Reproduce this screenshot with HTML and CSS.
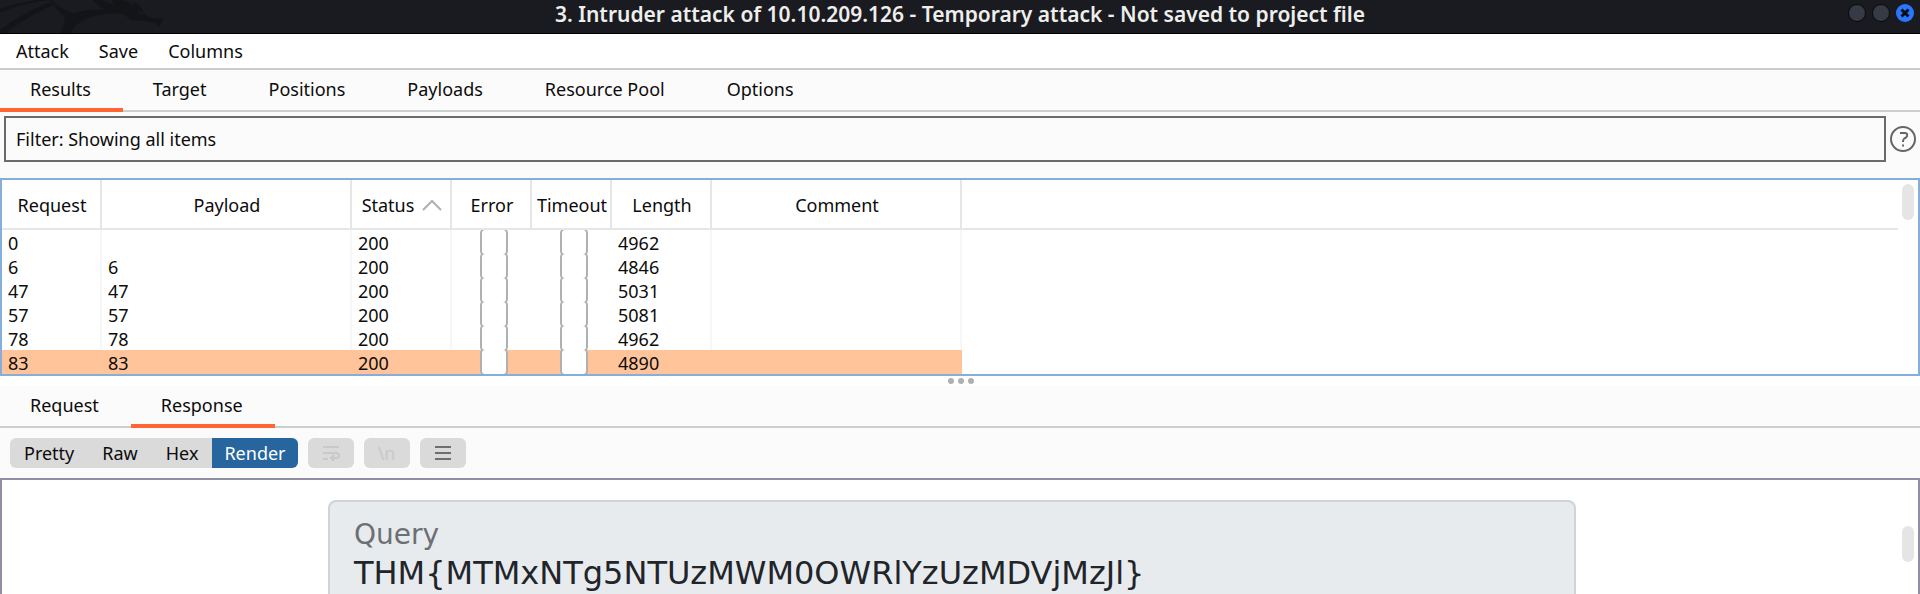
FILE: index.html
```html
<!DOCTYPE html>
<html lang="en">
<head>
<meta charset="utf-8">
<title>Intruder attack</title>
<link rel="stylesheet" href="styles.css">
</head>
<body>
<div class="window">
  <header class="titlebar">
    <svg class="dragon" width="170" height="33" viewBox="0 0 170 33" aria-hidden="true">
      <path class="dragon-fill" d="M52 0C58 6 66 12 74 13C84 10 94 9 106 10C98 6 94 3 93 0H102L114 5L112 0H123L134 5L133 1C140 5 143 9 143 13L146 15C150 18 154 19 164 18L159 27L155 23C146 21 138 20 134 21C129 20 127 16 124 14C106 12 78 16 71 33H60C64 25 66 19 64 16C58 11 54 6 50 0Z"/>
      <path class="dragon-fill" d="M0 30C16 18 32 9 50 2L53 5C36 13 18 23 6 33H0Z"/>
      <path class="dragon-fill" d="M0 9C14 4 26 1 38 0H52C32 2 14 6 0 13Z"/>
      <path class="dragon-eye" d="M138 12l5 2"/>
    </svg>
    <h1 class="title">3. Intruder attack of 10.10.209.126 - Temporary attack - Not saved to project file</h1>
    <div class="controls">
      <button class="control" aria-label="Minimize"></button>
      <button class="control" aria-label="Maximize"></button>
      <button class="control close" aria-label="Close">
        <svg width="18" height="18" viewBox="0 0 18 18"><path d="M5.5 5.5l7 7M12.5 5.5l-7 7"/></svg>
      </button>
    </div>
  </header>

  <nav class="menubar">
    <button class="menu">Attack</button>
    <button class="menu">Save</button>
    <button class="menu">Columns</button>
  </nav>

  <div class="tabs" role="tablist">
    <button class="tab selected" role="tab" aria-selected="true">Results</button>
    <button class="tab" role="tab">Target</button>
    <button class="tab" role="tab">Positions</button>
    <button class="tab" role="tab">Payloads</button>
    <button class="tab" role="tab">Resource Pool</button>
    <button class="tab" role="tab">Options</button>
  </div>

  <div class="filterbar">
    <button class="filter">Filter: Showing all items</button>
    <button class="help" aria-label="Help">
      <svg width="26" height="26" viewBox="0 0 26 26"><circle cx="13" cy="13" r="12"/><path d="M10 7H15C18 7 17.500 10.500 16 11.500C14 12.500 13 13 13 16M13 18.500v2"/></svg>
    </button>
  </div>

  <section class="results">
    <table class="grid">
      <colgroup>
        <col class="w-medium"><col class="w-wide"><col class="w-medium"><col class="w-small"><col class="w-small"><col class="w-medium"><col class="w-wide"><col>
      </colgroup>
      <thead>
        <tr>
          <th>Request</th><th>Payload</th>
          <th><span class="sorted">Status <svg width="20" height="12" viewBox="0 0 20 12"><path d="M1 11L10 2L19 11"/></svg></span></th>
          <th>Error</th><th>Timeout</th><th>Length</th><th>Comment</th><th class="rest"></th>
        </tr>
      </thead>
      <tbody>
        <tr><td>0</td><td></td><td>200</td><td class="check"><input type="checkbox" aria-label="Error"></td><td class="check"><input type="checkbox" aria-label="Timeout"></td><td>4962</td><td></td><td class="rest"></td></tr>
        <tr><td>6</td><td>6</td><td>200</td><td class="check"><input type="checkbox" aria-label="Error"></td><td class="check"><input type="checkbox" aria-label="Timeout"></td><td>4846</td><td></td><td class="rest"></td></tr>
        <tr><td>47</td><td>47</td><td>200</td><td class="check"><input type="checkbox" aria-label="Error"></td><td class="check"><input type="checkbox" aria-label="Timeout"></td><td>5031</td><td></td><td class="rest"></td></tr>
        <tr><td>57</td><td>57</td><td>200</td><td class="check"><input type="checkbox" aria-label="Error"></td><td class="check"><input type="checkbox" aria-label="Timeout"></td><td>5081</td><td></td><td class="rest"></td></tr>
        <tr><td>78</td><td>78</td><td>200</td><td class="check"><input type="checkbox" aria-label="Error"></td><td class="check"><input type="checkbox" aria-label="Timeout"></td><td>4962</td><td></td><td class="rest"></td></tr>
        <tr class="active"><td>83</td><td>83</td><td>200</td><td class="check"><input type="checkbox" aria-label="Error"></td><td class="check"><input type="checkbox" aria-label="Timeout"></td><td>4890</td><td></td><td class="rest"></td></tr>
      </tbody>
    </table>
    <div class="scroll"><div class="thumb"></div></div>
  </section>

  <div class="splitter"><i></i><i></i><i></i></div>

  <div class="tabs" role="tablist">
    <button class="tab" role="tab">Request</button>
    <button class="tab selected" role="tab" aria-selected="true">Response</button>
  </div>

  <div class="toolbar">
    <div class="segments">
      <button class="segment">Pretty</button>
      <button class="segment">Raw</button>
      <button class="segment">Hex</button>
      <button class="segment current">Render</button>
    </div>
    <button class="tool off" aria-label="Wrap lines" disabled>
      <svg width="18" height="16" viewBox="0 0 18 16"><path d="M1 2H17M1 8H14C18 8 18 13 14 13H10M12 10L9 13L12 16M1 14H6"/></svg>
    </button>
    <button class="tool off" disabled>\n</button>
    <button class="tool" aria-label="Menu">
      <svg width="18" height="16" viewBox="0 0 18 16"><path d="M1 2H17M1 8H17M1 14H17"/></svg>
    </button>
  </div>

  <section class="render">
    <div class="page">
      <div class="card">
        <p class="label">Query</p>
        <p class="flag">THM{MTMxNTg5NTUzMWM0OWRlYzUzMDVjMzJl}</p>
      </div>
    </div>
    <div class="scroll middle"><div class="thumb"></div></div>
  </section>
</div>
</body>
</html>
```
FILE: styles.css
```css
* { box-sizing: border-box; }
body {
  margin: 0;
  background: #fbfbfb;
  color: #0c0c0c;
  font: 18px/24px "Noto Sans", sans-serif;
}
button {
  margin: 0;
  padding: 0;
  border: 0;
  background: none;
  color: inherit;
  font: inherit;
}
svg { display: block; fill: none; stroke: currentColor; }

.window {
  display: flex;
  flex-direction: column;
  height: 100vh;
  overflow: hidden;
}
.window > * { flex: none; }

.titlebar {
  display: grid;
  grid-template-columns: 1fr auto 1fr;
  height: 34px;
  background: #1a1b20;
  border-bottom: 1px solid #000;
}
.dragon-fill { fill: #131418; stroke: none; }
.dragon-eye { stroke: #202228; }
.title {
  margin: 0;
  color: #eeeeec;
  font-size: 21px;
  font-weight: 600;
  line-height: 28px;
}
.controls {
  display: flex;
  justify-content: flex-end;
  gap: 6px;
  padding: 4px 6px;
}
.control {
  width: 18px;
  height: 18px;
  border: 1px solid #08090b;
  border-radius: 50%;
  background: #363a45;
}
.close { border: 0; background: #2777ff; color: #0b0d14; }
.close svg { stroke-width: 3; }

.menubar {
  display: flex;
  gap: 30px;
  height: 36px;
  padding: 0 16px;
  background: #fff;
  border-bottom: 2px solid #ccc;
}

.tabs {
  display: flex;
  height: 42px;
  border-bottom: 2px solid #cbd0cf;
}
.tab {
  height: 42px;
  padding: 0 32px 0 30px;
  border-bottom: 4px solid transparent;
}
.tab.selected { border-color: #ff6633; }

.filterbar {
  display: flex;
  align-items: center;
  gap: 4px;
  padding: 4px 4px 16px;
}
.filter {
  flex: 1;
  height: 46px;
  padding: 0 10px;
  border: 2px solid #6b6b6b;
  text-align: left;
}
.help { color: #666; }
.help svg { stroke-width: 2; }

.results {
  display: flex;
  background: #fff;
  border: 2px solid #86aedb;
}
.grid {
  flex: 1;
  table-layout: fixed;
  border-collapse: separate;
  border-spacing: 0;
}
.w-small { width: 80px; }
.w-medium { width: 100px; }
.w-wide { width: 250px; }
.grid th {
  height: 50px;
  padding: 2px 0 0 2px;
  border-right: 2px solid #e6e6e6;
  border-bottom: 2px solid #e6e6e6;
  font-weight: 400;
}
.sorted {
  display: flex;
  align-items: center;
  justify-content: center;
  gap: 8px;
}
.sorted svg { color: #b0b0b0; stroke-width: 2; }
.grid td {
  height: 24px;
  padding: 2px 0 0 6px;
  border-right: 2px solid #f7f7f7;
  line-height: 22px;
}
.grid .check { padding-top: 0; border-color: transparent; }
.grid .rest { border-right: 0; }
.active td { background: #ffc499; border-color: #ffc499; }
.grid .active .rest { background: none; }
/* The box is taller than its row, so its top and bottom edges are cut off. */
.check input {
  display: block;
  appearance: none;
  width: 28px;
  height: 28px;
  margin: -2px auto;
  border: 2px solid #b0b0b0;
  border-radius: 5px;
  background: #fff;
  clip-path: inset(2px 0);
}

.scroll { display: flex; flex: none; width: 20px; padding: 4px; }
.thumb {
  width: 12px;
  height: 36px;
  border-radius: 6px;
  background: #e5e5e5;
}
.middle { padding-top: 46px; }

.splitter {
  display: flex;
  justify-content: center;
  gap: 4px;
  padding: 2px 0 2px 2px;
  background: #fff;
}
.splitter i {
  width: 6px;
  height: 6px;
  border-radius: 50%;
  background: #b0b0b0;
}

.toolbar {
  display: flex;
  gap: 10px;
  padding: 10px;
}
.segments {
  display: flex;
  overflow: hidden;
  border-radius: 6px;
  background: #dadada;
}
.segment { height: 30px; padding: 0 14px; }
.segment.current { padding: 0 12px; background: #26659e; color: #fff; }
.tool {
  display: flex;
  align-items: center;
  justify-content: center;
  width: 46px;
  height: 30px;
  border-radius: 6px;
  background: #dadada;
  color: #6e6e6e;
}
.tool.off { color: #c9c9c9; }
.tool svg { stroke-width: 2; }

.window > .render {
  display: flex;
  flex: 1;
  min-height: 0;
  overflow: hidden;
  background: #fff;
  border: 2px solid #8f8fa1;
  border-bottom: 0;
}
.page { flex: 1; padding: 20px 0 0 4px; }
.card {
  max-width: 1248px;
  height: 160px;
  margin: 0 auto;
  padding: 14px 24px;
  border: 2px solid #ced4da;
  border-radius: 8px;
  background: #e8ebee;
  font-family: "DejaVu Sans", sans-serif;
}
.card p { margin: 0; }
.label { color: #6c7074; font-size: 28px; line-height: 38px; }
.flag { color: #212529; font-size: 32px; line-height: 38px; }
```
